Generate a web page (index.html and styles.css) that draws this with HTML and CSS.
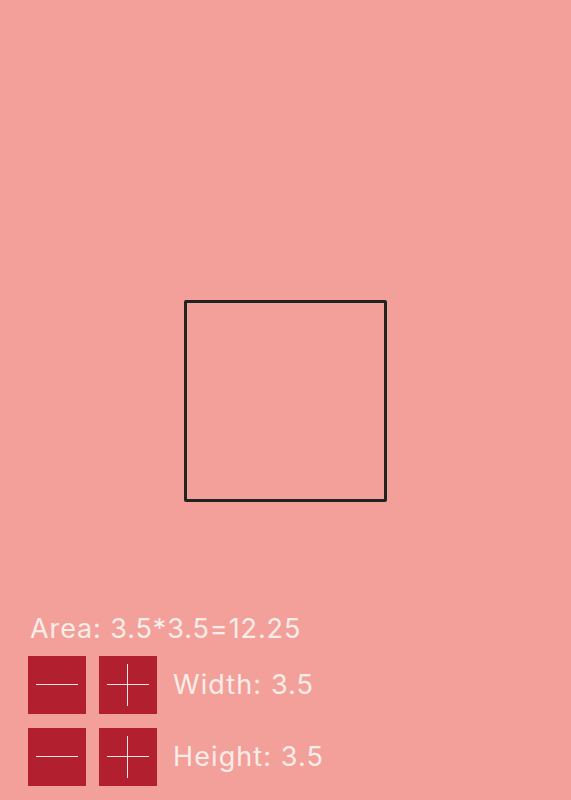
FILE: index.html
```html
<!DOCTYPE html>
<html>
<head>
<meta charset="utf-8">
<link rel="stylesheet" href="styles.css">
</head>
<body>
<div class="page">
  <div class="square"></div>
  <div class="controls">
    <div class="area">Area: 3.5*3.5=12.25</div>
    <div class="row">
      <button class="btn minus" aria-label="decrease width"><span class="h"></span></button>
      <button class="btn plus" aria-label="increase width"><span class="h"></span><span class="v"></span></button>
      <span class="label">Width: 3.5</span>
    </div>
    <div class="row">
      <button class="btn minus" aria-label="decrease height"><span class="h"></span></button>
      <button class="btn plus" aria-label="increase height"><span class="h"></span><span class="v"></span></button>
      <span class="label">Height: 3.5</span>
    </div>
  </div>
</div>
</body>
</html>
```
FILE: styles.css
```css
html, body {
  margin: 0;
  padding: 0;
  background: #f4a09a;
}
.page {
  height: 800px;
  display: grid;
  grid-template: 1fr / 1fr;
  font-family: "Inter", "DejaVu Sans", sans-serif;
  color: #f9ede9;
}
.square {
  grid-area: 1 / 1;
  place-self: center;
  width: 197px;
  height: 196px;
  border: 3px solid #1f2322;
  border-radius: 2px;
  margin-top: 1px;
}
.controls {
  grid-area: 1 / 1;
  align-self: end;
  padding: 0 0 14px 28px;
  display: flex;
  flex-direction: column;
  gap: 14px;
}
.area {
  font-size: 27px;
  line-height: 30px;
  letter-spacing: 0.9px;
  padding-left: 2px;
  margin-bottom: -2px;
}
.row {
  display: flex;
  align-items: center;
  gap: 13px;
}
.btn {
  position: relative;
  width: 58px;
  height: 58px;
  border: none;
  padding: 0;
  margin: 0;
  background: #b21f2e;
  cursor: pointer;
}
.btn .h {
  position: absolute;
  left: 8px;
  right: 8px;
  top: 28px;
  height: 1px;
  background: #fae4e4;
}
.btn .v {
  position: absolute;
  top: 8px;
  bottom: 8px;
  left: 28px;
  width: 1px;
  background: #fae4e4;
}
.label {
  margin-left: 3px;
  font-size: 27px;
  line-height: 30px;
  letter-spacing: 1.1px;
}
```
